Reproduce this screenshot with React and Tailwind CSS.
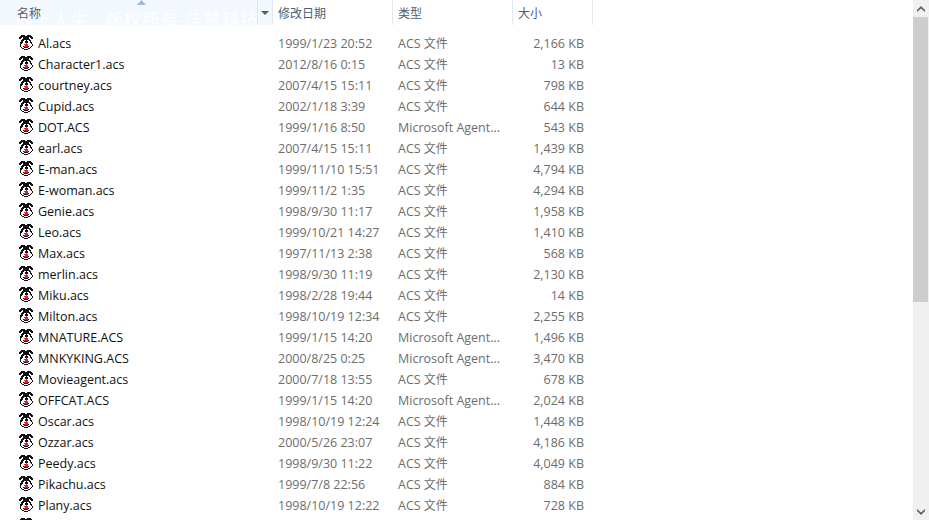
const FONT = "font-['Open_Sans','Noto_Sans_CJK_SC',sans-serif]";

const files = [
    ["Al.acs", "1999/1/23 20:52", "ACS", "2,166 KB"],
    ["Character1.acs", "2012/8/16 0:15", "ACS", "13 KB"],
    ["courtney.acs", "2007/4/15 15:11", "ACS", "798 KB"],
    ["Cupid.acs", "2002/1/18 3:39", "ACS", "644 KB"],
    ["DOT.ACS", "1999/1/16 8:50", "Microsoft Agent...", "543 KB"],
    ["earl.acs", "2007/4/15 15:11", "ACS", "1,439 KB"],
    ["E-man.acs", "1999/11/10 15:51", "ACS", "4,794 KB"],
    ["E-woman.acs", "1999/11/2 1:35", "ACS", "4,294 KB"],
    ["Genie.acs", "1998/9/30 11:17", "ACS", "1,958 KB"],
    ["Leo.acs", "1999/10/21 14:27", "ACS", "1,410 KB"],
    ["Max.acs", "1997/11/13 2:38", "ACS", "568 KB"],
    ["merlin.acs", "1998/9/30 11:19", "ACS", "2,130 KB"],
    ["Miku.acs", "1998/2/28 19:44", "ACS", "14 KB"],
    ["Milton.acs", "1998/10/19 12:34", "ACS", "2,255 KB"],
    ["MNATURE.ACS", "1999/1/15 14:20", "Microsoft Agent...", "1,496 KB"],
    ["MNKYKING.ACS", "2000/8/25 0:25", "Microsoft Agent...", "3,470 KB"],
    ["Movieagent.acs", "2000/7/18 13:55", "ACS", "678 KB"],
    ["OFFCAT.ACS", "1999/1/15 14:20", "Microsoft Agent...", "2,024 KB"],
    ["Oscar.acs", "1998/10/19 12:24", "ACS", "1,448 KB"],
    ["Ozzar.acs", "2000/5/26 23:07", "ACS", "4,186 KB"],
    ["Peedy.acs", "1998/9/30 11:22", "ACS", "4,049 KB"],
    ["Pikachu.acs", "1999/7/8 22:56", "ACS", "884 KB"],
    ["Plany.acs", "1998/10/19 12:22", "ACS", "728 KB"],
];

// pixel map of the 16px shell icon
const ICON = [
    "..####..####..",
    ".############.",
    "###.######.###",
    "##..######..##",
    "...########...",
    "..###WW#WW##..",
    "..##WWK#KWW#..",
    ".###WWK#KWW##.",
    ".##WWWWRWWWW#.",
    ".#WWWRRRRWWWW#",
    ".#WWWWRRRWWWW#",
    ".#WW#RRRR#WW#.",
    "..#WW####WW#..",
    "...##WWWW##...",
    ".....####.....",
];
const PIXEL = { "#": "#111111", K: "#111111", W: "#ffffff", R: "#d8232a" };

function AgentIcon() {
    return (
        <svg width="14" height="15" viewBox="0 0 14 15" shapeRendering="crispEdges" className="mb-[2px] shrink-0">
            {ICON.flatMap((line, y) =>
                [...line].map((c, x) =>
                    PIXEL[c] ? <rect key={`${x}-${y}`} x={x} y={y} width="1" height="1" fill={PIXEL[c]} /> : null
                )
            )}
        </svg>
    );
}

function Row({ file }) {
    const [name, date, type, size] = file;
    return (
        <div className="flex h-[21px] items-center text-[12.5px] leading-[21px]">
            <div className="flex w-[278px] shrink-0 items-center gap-[5px] pl-[19px] text-[#111]">
                <AgentIcon />
                <span>{name}</span>
            </div>
            <div className="w-[120px] shrink-0 text-[#6d6d6d]">{date}</div>
            <div className="w-[120px] shrink-0 text-[#6d6d6d]">
                {type}
                {type === "ACS" && <span className="text-xs"> 文件</span>}
            </div>
            <div className="w-[66px] shrink-0 text-right text-[#6d6d6d]">{size}</div>
        </div>
    );
}

function Header() {
    return (
        <div className="flex h-[25px] text-xs text-[#4c607a]">
            <div className="relative flex w-[273px] shrink-0 items-center overflow-hidden border-r border-[#e3e8ef] bg-[#f2f8fe] pl-[17px] pt-[3px]">
                <span className="absolute left-[15px] top-[10px] whitespace-nowrap text-[18px] leading-[20px] tracking-[0.4px] text-white">的上人生 - 版权所有-佳赞科技.</span>
                <span className="relative">名称</span>
                <svg width="9" height="5" viewBox="0 0 9 5" className="absolute left-[137px] top-0">
                    <path d="M4.5 0L9 5H0z" fill="#9fbdd2" />
                </svg>
                <div className="absolute bottom-0 left-[257px] top-0 border-l border-[#dbe7f3]" />
                <svg width="8" height="4" viewBox="0 0 8 4" className="absolute right-[3px] top-[11px]">
                    <path d="M0 0h8L4 4z" fill="#4c607a" />
                </svg>
            </div>
            <div className="flex w-[120px] shrink-0 items-center border-r border-[#e3e8ef] pl-[5px] pt-[3px]">修改日期</div>
            <div className="flex w-[120px] shrink-0 items-center border-r border-[#e3e8ef] pl-[5px] pt-[3px]">类型</div>
            <div className="flex w-[80px] shrink-0 items-center border-r border-[#e3e8ef] pl-[5px] pt-[3px]">大小</div>
        </div>
    );
}

function Scrollbar() {
    return (
        <div className="flex w-[16px] shrink-0 flex-col bg-[#f0f0f0]">
            <div className="flex h-[17px] shrink-0 items-center justify-center">
                <svg width="8" height="6" viewBox="0 0 8 6">
                    <path d="M4 0l4 4v2L4 2.5 0 6V4z" fill="#606060" />
                </svg>
            </div>
            <div className="mr-px h-[285px] shrink-0 bg-[#cdcdcd]" />
            <div className="flex-1" />
            <div className="flex h-[17px] shrink-0 items-center justify-center">
                <svg width="8" height="6" viewBox="0 0 8 6">
                    <path d="M4 6L0 2V0l4 3.5L8 0v2z" fill="#606060" />
                </svg>
            </div>
        </div>
    );
}

export default function App() {
    return (
        <div className={`flex h-[520px] w-[929px] overflow-hidden bg-white ${FONT}`}>
            <div className="min-w-0 flex-1 overflow-hidden">
                <Header />
                <div className="pt-[8px]">
                    {files.map((f) => (
                        <Row key={f[0]} file={f} />
                    ))}
                    {/* next row only peeks in at the bottom edge */}
                    <div className="flex h-[21px] items-start pl-[19px] pt-[2px]">
                        <AgentIcon />
                    </div>
                </div>
            </div>
            <Scrollbar />
        </div>
    );
}
